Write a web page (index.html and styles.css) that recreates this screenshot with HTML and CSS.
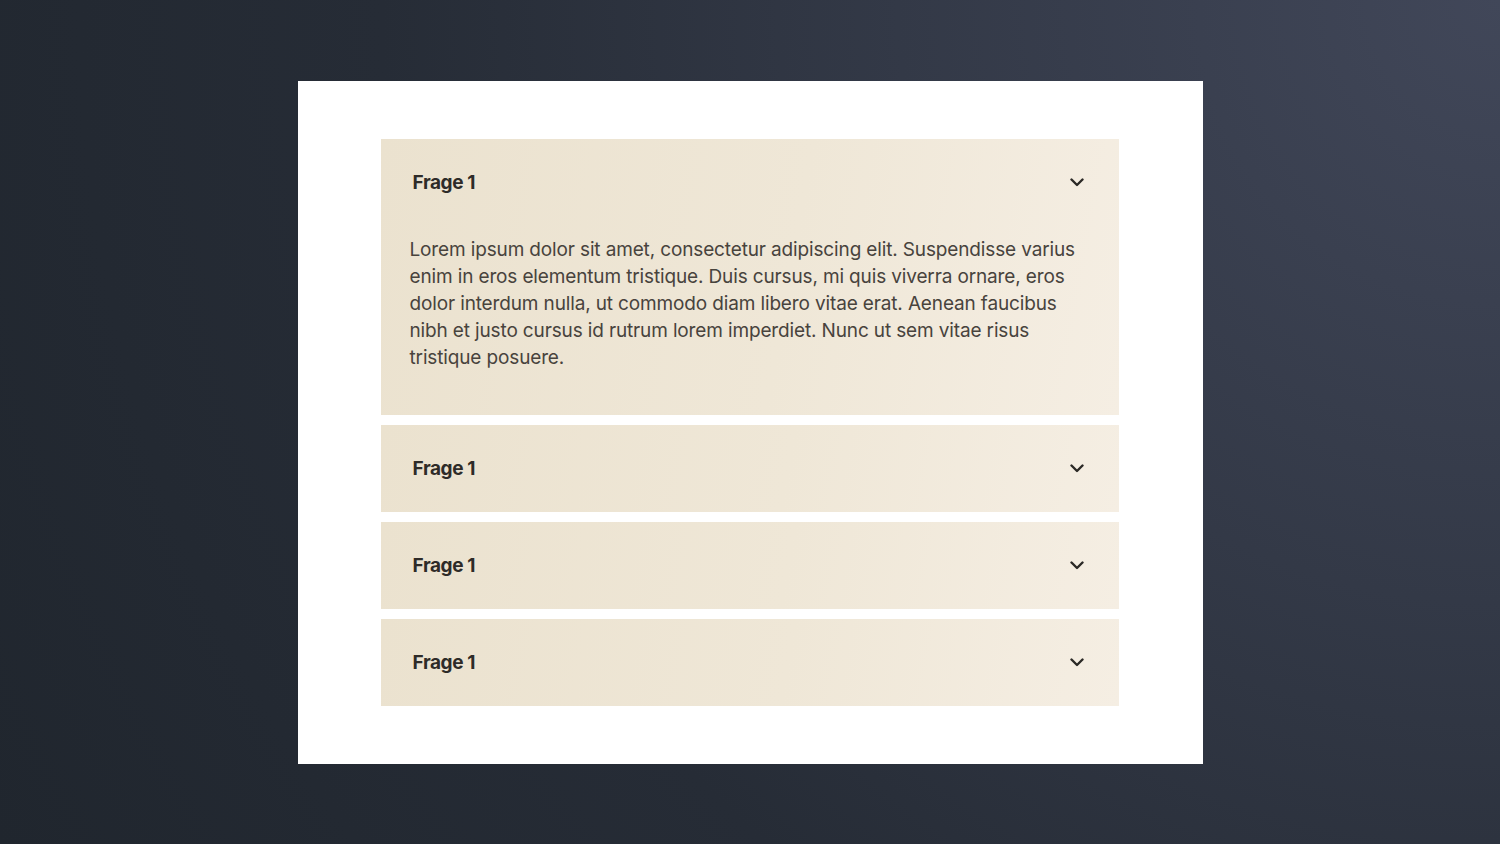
FILE: index.html
```html
<!DOCTYPE html>
<html lang="de">
<head>
    <meta charset="UTF-8">
    <meta name="viewport" content="width=device-width, initial-scale=1.0">
    <title>FAQ</title>
    <link rel="stylesheet" href="styles.css">
</head>
<body>

    <div class="card">
        <div class="faq">
            <div class="faq-item open">
                <div class="faq-head">
                    <span class="faq-title">Frage 1</span>
                    <svg class="chevron" width="14" height="9" viewBox="0 0 14 9"><path d="M1.5 1.5 L7 7 L12.5 1.5" fill="none" stroke="#2b2926" stroke-width="2.4" stroke-linecap="round" stroke-linejoin="round"/></svg>
                </div>
                <p class="faq-body">Lorem ipsum dolor sit amet, consectetur adipiscing elit. Suspendisse varius enim in eros elementum tristique. Duis cursus, mi quis viverra ornare, eros dolor interdum nulla, ut commodo diam libero vitae erat. Aenean faucibus nibh et justo cursus id rutrum lorem imperdiet. Nunc ut sem vitae risus tristique posuere.</p>
            </div>
            <div class="faq-item">
                <div class="faq-head">
                    <span class="faq-title">Frage 1</span>
                    <svg class="chevron" width="14" height="9" viewBox="0 0 14 9"><path d="M1.5 1.5 L7 7 L12.5 1.5" fill="none" stroke="#2b2926" stroke-width="2.4" stroke-linecap="round" stroke-linejoin="round"/></svg>
                </div>
            </div>
            <div class="faq-item">
                <div class="faq-head">
                    <span class="faq-title">Frage 1</span>
                    <svg class="chevron" width="14" height="9" viewBox="0 0 14 9"><path d="M1.5 1.5 L7 7 L12.5 1.5" fill="none" stroke="#2b2926" stroke-width="2.4" stroke-linecap="round" stroke-linejoin="round"/></svg>
                </div>
            </div>
            <div class="faq-item">
                <div class="faq-head">
                    <span class="faq-title">Frage 1</span>
                    <svg class="chevron" width="14" height="9" viewBox="0 0 14 9"><path d="M1.5 1.5 L7 7 L12.5 1.5" fill="none" stroke="#2b2926" stroke-width="2.4" stroke-linecap="round" stroke-linejoin="round"/></svg>
                </div>
            </div>
        </div>
    </div>

</body>
</html>
```

FILE: styles.css
```css
html, body {
    height: 100%;
}
body {
    margin: 0;
    font-family: 'Inter', 'Noto Sans', sans-serif;
    background: radial-gradient(circle at 100% 0%, #414759 0%, #333947 35%, #262c36 65%, #20262e 100%);
    display: flex;
    align-items: center;
    justify-content: center;
}
.card {
    width: 905px;
    height: 683px;
    box-sizing: border-box;
    background-color: #fff;
    padding: 58px 84px 57px 83px;
}
.faq {
    display: flex;
    flex-direction: column;
    gap: 10px;
}
.faq-item {
    background: linear-gradient(100deg, #ebe2cf 0%, #efe7d7 55%, #f5eee3 100%);
}
.faq-head {
    height: 87px;
    display: flex;
    align-items: center;
    justify-content: space-between;
    padding: 0 35px 0 32px;
}
.faq-title {
    font-size: 19px;
    font-weight: 700;
    color: #2e2b28;
    letter-spacing: -0.4px;
}
.chevron {
    display: block;
}
.faq-body {
    margin: 0;
    padding: 10px 30px 44px 29px;
    font-size: 19px;
    line-height: 27px;
    color: #48433d;
    letter-spacing: -0.14px;
}
```
